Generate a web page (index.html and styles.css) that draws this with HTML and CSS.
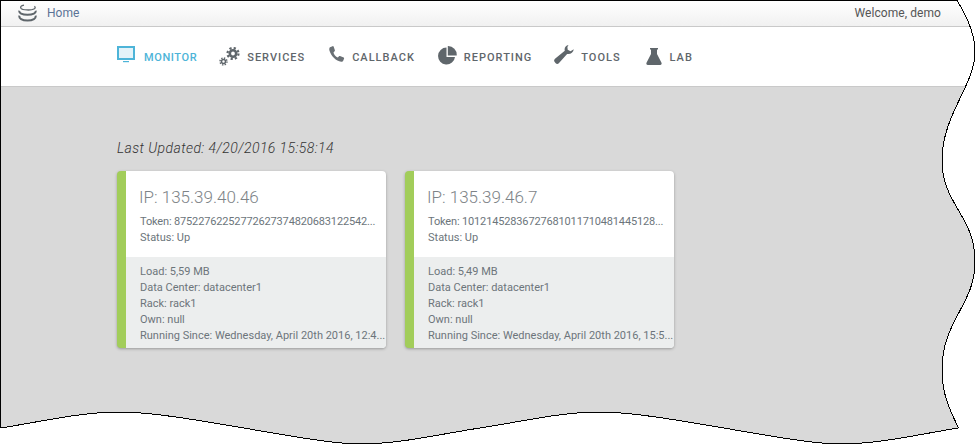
FILE: index.html
```html
<!DOCTYPE html>
<html lang="en">

<head>
    <meta charset="utf-8">
    <title>Monitor</title>
    <link rel="stylesheet" href="styles.css">
</head>

<body>
    <div class="page">
        <header class="topbar">
            <svg class="db-icon" width="19" height="18" viewBox="0 0 19 18" fill="none" stroke="#5f666b">
                <path stroke-width="1.300" d="M6 1.200C3 1.600 2 3 3 4.400c1.500 1.800 10 2.200 13 .6 1.500-.8 1.500-2 .4-2.800" />
                <path stroke-width="2" d="M1.500 6.800c-1 2 2.500 4 8 4s9-2 8-4" />
                <path stroke-width="2" d="M1.500 11.600c-1 2.500 2.500 5 8 5s9-2.500 8-5" />
            </svg>
            <a class="home" href="#">Home</a>
            <span class="welcome">Welcome, demo</span>
        </header>

        <nav class="menu">
            <a class="menu-item active" href="#">
                <svg class="ic-monitor" width="18" height="17" viewBox="0 0 18 17">
                    <rect x="1" y="1" width="16" height="12" fill="#e4f3f9" stroke="#4db4d8" stroke-width="2" />
                    <rect x="6" y="15" width="6" height="1.200" fill="#4db4d8" />
                </svg>
                MONITOR
            </a>
            <a class="menu-item" href="#">
                <svg class="ic-gears" width="21" height="19" viewBox="0 0 21 19" fill="none" stroke="#5f666b">
                    <circle cx="14" cy="6.500" r="3.200" stroke-width="2.600" />
                    <circle cx="14" cy="6.500" r="5.500" stroke-width="2.200" stroke-dasharray="2.200 2.120" />
                    <circle cx="4.500" cy="14.500" r="2" stroke-width="1.500" />
                    <circle cx="4.500" cy="14.500" r="3.500" stroke-width="1.400" stroke-dasharray="1.400 1.350" />
                </svg>
                SERVICES
            </a>
            <a class="menu-item phone" href="#">
                <svg class="ic-phone" width="16" height="16" viewBox="0 0 16 16" fill="#6a7075">
                    <path d="M1 1.200 3.600.2c.5-.2.800 0 1 .4l1.300 3.600c.1.400 0 .7-.3 1L4.500 6.400c.3 2 2.300 4.300 4.300 5l1.200-1.200c.3-.3.600-.3 1-.2l3.700 1.600c.4.200.5.500.4.900l-.9 2.300c-.3.800-1 1.200-2 1C7 15 2.300 10.500.5 4.800.1 3.300.2 1.800 1 1.200z" />
                </svg>
                CALLBACK
            </a>
            <a class="menu-item reporting" href="#">
                <svg class="ic-pie" width="19" height="19" viewBox="0 0 19 19" fill="#5f666b">
                    <path d="M8.500 1.500a8.500 8.500 0 1 0 8.500 9.500h-8.500z" />
                    <path d="M9.800 0a8.800 8.800 0 0 1 8.900 9.500H9.800z" />
                </svg>
                REPORTING
            </a>
            <a class="menu-item" href="#">
                <svg class="ic-wrench" width="20" height="19" viewBox="0 0 20 19" fill="#5f666b">
                    <path d="M14.500 0c-2.800.6-4.500 3-3.700 5.700L1 13.800c-1.100 1-1.200 2.300-.3 3.300l1 1.200c1 .9 2.200.8 3.100-.1l8.300-9.300c3 .8 6.200-1.300 6.700-4.700l-3.300 2-2.800-1.500-.3-2.800z" />
                </svg>
                TOOLS
            </a>
            <a class="menu-item flask" href="#">
                <svg class="ic-flask" width="16" height="17" viewBox="0 0 16 17" fill="#5f666b">
                    <path d="M4 0h8v1.500h-1v4.500l4.500 8.800c.5 1-.1 2.200-1.300 2.200H1.800C.6 17 0 15.800.5 14.800L5 6V1.500H4z" />
                </svg>
                LAB
            </a>
        </nav>

        <main class="content">
            <p class="updated">Last Updated: 4/20/2016 15:58:14</p>

            <div class="cards">
                <section class="card">
                    <div class="card-top">
                        <h2>IP: 135.39.40.46</h2>
                        <p class="token">Token: 87522762252772627374820683122542...</p>
                        <p>Status: Up</p>
                    </div>
                    <div class="card-bottom">
                        <p>Load: 5,59 MB</p>
                        <p>Data Center: datacenter1</p>
                        <p>Rack: rack1</p>
                        <p>Own: null</p>
                        <p>Running Since: Wednesday, April 20th 2016, 12:4...</p>
                    </div>
                </section>

                <section class="card">
                    <div class="card-top">
                        <h2>IP: 135.39.46.7</h2>
                        <p class="token">Token: 10121452836727681011710481445128...</p>
                        <p>Status: Up</p>
                    </div>
                    <div class="card-bottom">
                        <p>Load: 5,49 MB</p>
                        <p>Data Center: datacenter1</p>
                        <p>Rack: rack1</p>
                        <p>Own: null</p>
                        <p>Running Since: Wednesday, April 20th 2016, 15:5...</p>
                    </div>
                </section>
            </div>
        </main>
    </div>

    <!-- torn paper edge of the screenshot -->
    <svg class="edge" width="976" height="446" viewBox="0 0 976 446" fill="none" stroke="#000" stroke-width="1" shape-rendering="crispEdges">
        <path d="M.5.500H957C968 18 975 35 975 52C975 85 942 115 942 160C942 205 975 215 975 262C975 305 942 320 942 370C942 395 950 410 958.500 428C920 434 880 444 840 444C790 444 660 412 600 412C560 412 520 422 480 428C440 434 400 444 360 444C310 444 180 412 120 412C80 412 40 422 .5 428Z" />
    </svg>
</body>

</html>
```

FILE: styles.css
```css
* {
    box-sizing: border-box;
}

html,
body {
    margin: 0;
    height: 446px;
    overflow: hidden;
    background-color: #fff;
}

body {
    position: relative;
    font-family: Roboto, "Liberation Sans", sans-serif;
}

p,
h2 {
    margin: 0;
}

a {
    text-decoration: none;
}

.page {
    height: 446px;
    display: flex;
    flex-direction: column;
    clip-path: path("M0 0H957C968 18 975 35 975 52C975 85 942 115 942 160C942 205 975 215 975 262C975 305 942 320 942 370C942 395 950 410 958.500 428C920 434 880 444 840 444C790 444 660 412 600 412C560 412 520 422 480 428C440 434 400 444 360 444C310 444 180 412 120 412C80 412 40 422 0 428Z");
}

.edge {
    position: absolute;
    top: 0;
    left: 0;
}

.topbar {
    height: 27px;
    flex: none;
    display: flex;
    align-items: center;
    padding: 0 22px 1px 18px;
    background: linear-gradient(#fff, #f1f1f1);
    border-bottom: 1px solid #c9c9c9;
    font-size: 12px;
}

.db-icon {
    margin-right: 10px;
}

.home {
    color: #5b7396;
}

.welcome {
    margin-left: auto;
    margin-right: 13px;
    letter-spacing: .07px;
    color: #555;
}

.menu {
    height: 60px;
    flex: none;
    display: flex;
    align-items: center;
    gap: 22px;
    padding: 1px 0 0 117px;
    background-color: #fff;
    border-bottom: 1px solid #c9c9c9;
}

.menu-item {
    display: flex;
    align-items: center;
    gap: 7px;
    color: #5f666b;
    font-size: 11px;
    font-weight: 500;
    letter-spacing: 1px;
}

.menu-item.active {
    color: #4db4d8;
    gap: 9px;
    letter-spacing: .6px;
}

.phone {
    margin-left: 2px;
}

.reporting {
    margin-left: 1px;
}

.flask {
    margin-left: 3px;
    gap: 8px;
}

/* each glyph sits at its own height next to the label */
.ic-monitor {
    margin-top: -5px;
}

.ic-gears {
    margin-top: -2px;
}

.ic-phone {
    margin-top: -7px;
}

.ic-pie {
    margin-top: -4px;
}

.ic-wrench {
    margin-top: -6px;
}

.ic-flask {
    margin-top: -1px;
}

.content {
    flex: 1;
    background-color: #d9d9d9;
    padding: 52px 0 0 117px;
}

.updated {
    height: 18px;
    line-height: 18px;
    font-size: 14px;
    font-weight: 300;
    font-style: italic;
    letter-spacing: .42px;
    color: #333;
}

.cards {
    display: flex;
    gap: 19px;
    margin-top: 14px;
}

.card {
    width: 269px;
    height: 177px;
    border-left: 9px solid #a2cd5a;
    border-radius: 4px;
    background-color: #fff;
    box-shadow: 0 1px 3px rgba(0, 0, 0, .3);
    overflow: hidden;
    font-size: 11px;
    line-height: 16px;
    color: #6c757b;
}

.card p {
    white-space: nowrap;
}

.card .token {
    letter-spacing: -.15px;
}

.card h2 {
    font-size: 17px;
    font-weight: 300;
    line-height: 24px;
    margin: 0 0 5px -1px;
    color: #7d8387;
}

.card-top {
    height: 86px;
    padding: 14px 9px 0 14px;
}

.card-bottom {
    height: 91px;
    padding: 7px 0 0 14px;
    background-color: #eceeee;
}
```
